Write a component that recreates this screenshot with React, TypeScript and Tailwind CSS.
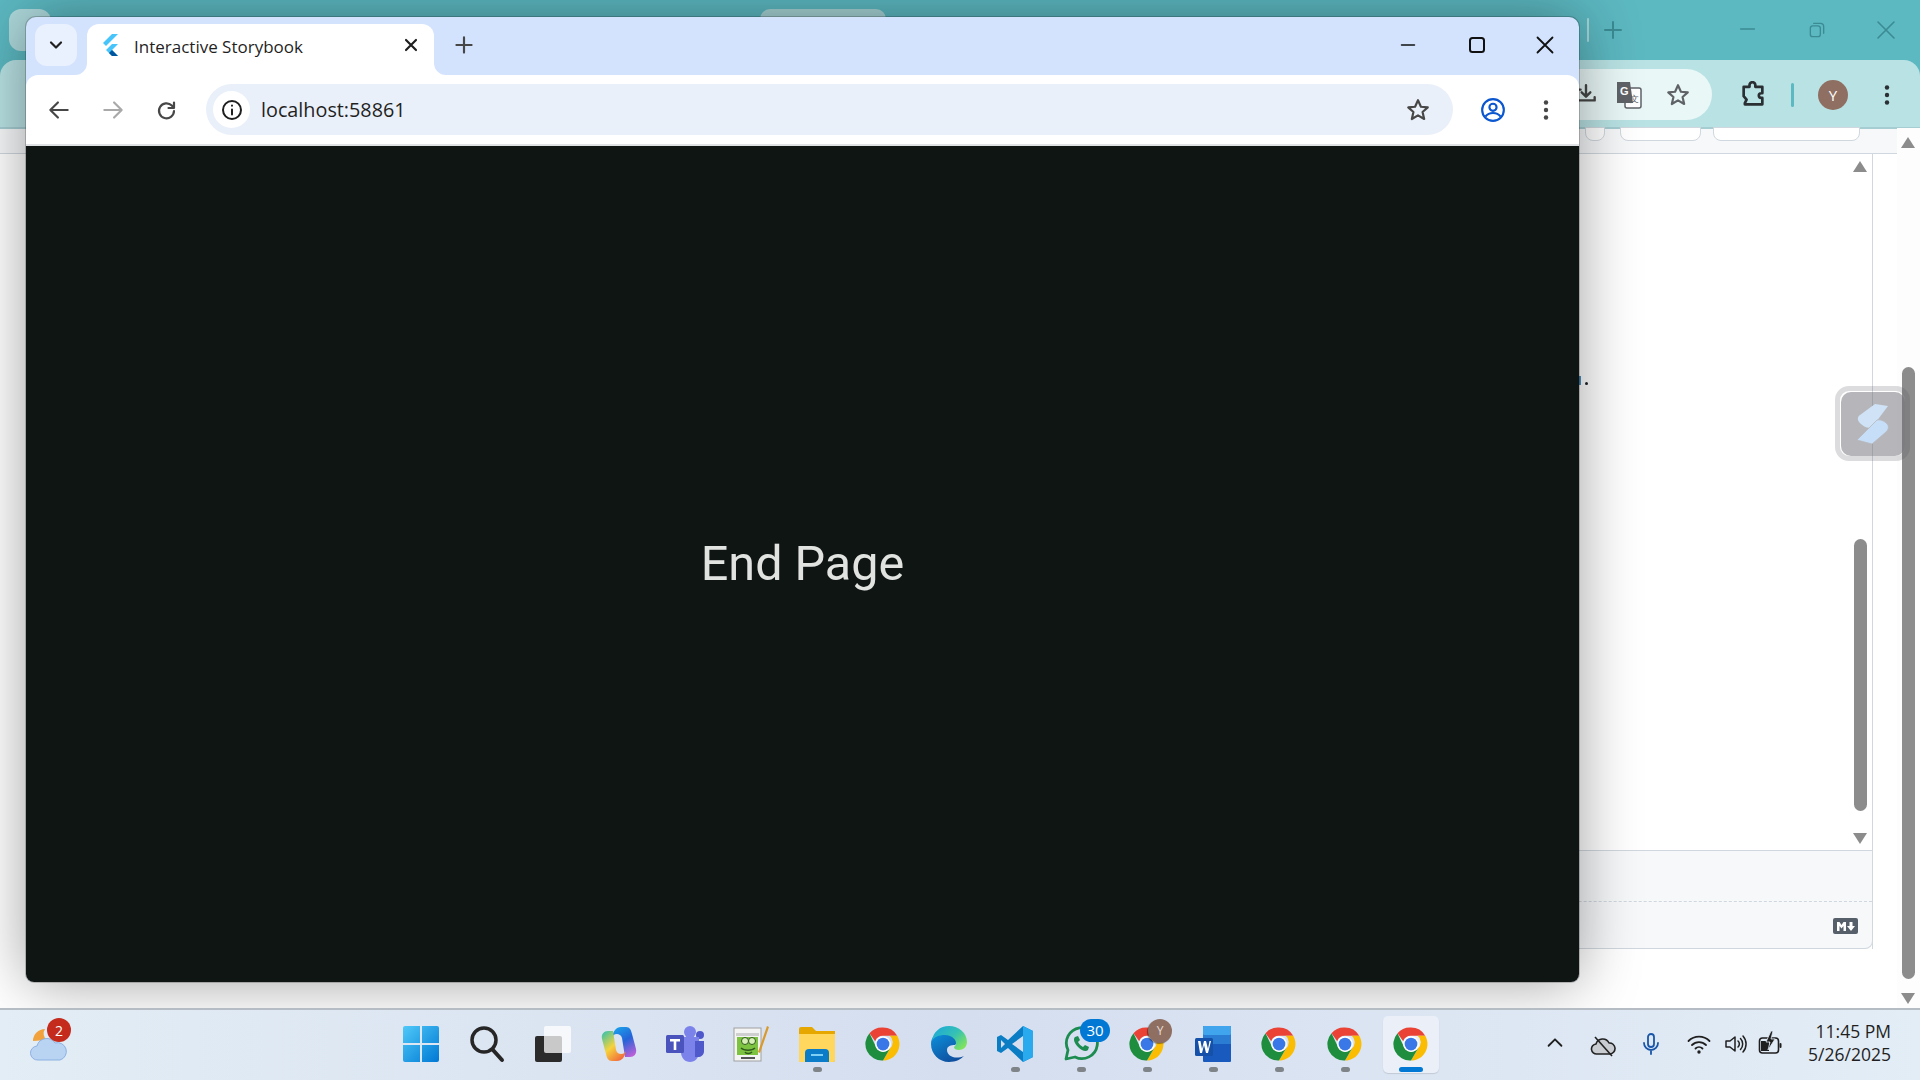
import React from "react";

const sans = "font-['Open_Sans','Noto_Sans',sans-serif]";

function Chrome({ size = 36 }: { size?: number }) {
  return (
    <svg width={size} height={size} viewBox="0 0 48 48">
      <path d="M24 2a22 22 0 0 1 19 11H24a11 11 0 0 0-10.4 7.400L6 9.500A22 22 0 0 1 24 2z" fill="#ea4335" />
      <path d="M43 13a22 22 0 0 1-19 33l9.500-16.500A11 11 0 0 0 33 13z" fill="#fbbc04" />
      <path d="M6 9.500l9.500 20A11 11 0 0 0 33.500 29.500L24 46A22 22 0 0 1 6 9.500z" fill="#1e8e3e" />
      <circle cx="24" cy="24" r="10.500" fill="#fff" />
      <circle cx="24" cy="24" r="8.500" fill="#3b78e7" />
    </svg>
  );
}

function Slot({ children, dot, active }: { children: React.ReactNode; dot?: boolean; active?: boolean }) {
  return (
    <div className="relative flex h-full w-[66px] items-center justify-center pb-[2px]">
      {active && <div className="absolute left-[5px] top-[6px] h-[57px] w-[56px] rounded-[5px] bg-[#eaeff8] shadow-[0_1px_1px_rgba(0,0,0,0.12)]" />}
      <div className="relative">{children}</div>
      {dot && <div className="absolute bottom-[8px] left-[29px] h-[5px] w-[9px] rounded-full bg-[#7f8489]" />}
      {active && <div className="absolute bottom-[8px] left-[21px] h-[5px] w-[24px] rounded-full bg-[#0078d4]" />}
    </div>
  );
}

function Stroke({ size = 24, w = 2, color = "currentColor", children }: { size?: number; w?: number; color?: string; children: React.ReactNode }) {
  return (
    <svg width={size} height={size} viewBox="0 0 24 24" fill="none" stroke={color} strokeWidth={w} strokeLinecap="round" strokeLinejoin="round">
      {children}
    </svg>
  );
}

const Star = ({ color = "#474747", size = 26 }: { color?: string; size?: number }) => (
  <svg width={size} height={size} viewBox="0 0 24 24" fill="none" stroke={color} strokeWidth="2" strokeLinejoin="round">
    <path d="M12 3l2.700 6 6.300.6-4.800 4.200 1.500 6.500L12 16.900l-5.700 3.400 1.500-6.500L3 9.600 9.300 9z" />
  </svg>
);

const Dots = ({ color = "#474747" }: { color?: string }) => (
  <svg width="8" height="24" viewBox="0 0 8 24" fill={color}>
    <circle cx="4" cy="4.500" r="2.200" />
    <circle cx="4" cy="12" r="2.200" />
    <circle cx="4" cy="19.500" r="2.200" />
  </svg>
);

function BackWindow() {
  return (
    <div className="absolute inset-0 flex flex-col bg-[#5cb8c1]">
      <div className="relative flex h-[60px] shrink-0 items-start">
        <div className="absolute left-[9px] top-[9px] h-[42px] w-[42px] rounded-[12px] bg-[#aed9dc]" />
        <div className="absolute left-[760px] top-[9px] h-[20px] w-[126px] rounded-t-[10px] bg-[#a6d3d6]" />
        <div className="absolute left-[1587px] top-[18px] h-[24px] w-[2px] rounded bg-[#a8d9dc]" />
        <div className="absolute left-[1601px] top-[18px] text-[#3b8b93]">
          <Stroke size={24} w={2}><path d="M12 4v16M4 12h16" /></Stroke>
        </div>
        <div className="ml-auto flex h-full items-center text-[#3b8b93]">
          <div className="flex w-[69px] justify-center pb-[2px]"><Stroke size={22} w={1.600}><path d="M4 12h15" /></Stroke></div>
          <div className="flex w-[69px] justify-center"><Stroke size={20} w={1.600}><rect x="4" y="7" width="12" height="13" rx="3" /><path d="M8 4h8a4 4 0 0 1 4 4v8" /></Stroke></div>
          <div className="flex w-[69px] justify-center"><Stroke size={24} w={1.600}><path d="M4 4l16 16M20 4L4 20" /></Stroke></div>
        </div>
      </div>
      <div className="relative flex h-[69px] shrink-0 items-center rounded-t-[16px] border-b-2 border-[#a5cdd2] bg-[#b9e2e4]">
        <div className="absolute left-[1200px] top-[9px] flex h-[51px] w-[512px] items-center justify-end rounded-full bg-[#e9f7f7] pr-[21px] text-[#474747]">
          <div className="mr-[17px]">
            <Stroke size={26} w={2.200}><path d="M12 3v10M8 9.500l4 4 4-4M7 7H4v10h16v-3" /></Stroke>
          </div>
          <div className="mr-[23px]">
            <svg width="26" height="30" viewBox="0 0 26 30">
              <rect x="9" y="8" width="16" height="20" rx="2" fill="#fff" stroke="#5f6368" strokeWidth="1.500" />
              <path d="M1 2h13l3 21H1z" fill="#5f6368" />
              <text x="4" y="15" fontSize="11" fill="#fff" fontFamily="Liberation Sans" fontWeight="700">G</text>
              <text x="14" y="22" fontSize="9" fill="#5f6368" fontFamily="Liberation Sans">文</text>
            </svg>
          </div>
          <Star color="#5f6368" size={26} />
        </div>
        <div className="absolute left-[1739px] top-[21px] text-[#2a2f33]">
          <svg width="28" height="28" viewBox="0 0 24 24" fill="none" stroke="currentColor" strokeWidth="2.300" strokeLinejoin="round">
            <path d="M4 5h5V3.500a2.500 2.500 0 0 1 5 0V5h6v5.500h-1a2 2 0 0 0 0 4h1V20H5v-1l1.500-3L4 13z" />
          </svg>
        </div>
        <div className="absolute left-[1791px] top-[23px] h-[24px] w-[3px] rounded bg-[#5cb8c1]" />
        <div className={`absolute left-[1818px] top-[20px] flex h-[30px] w-[30px] items-center justify-center rounded-full bg-[#8f6f61] text-[15px] text-white ${sans}`}>Y</div>
        <div className="absolute left-[1883px] top-[23px]"><Dots color="#2a2f33" /></div>
      </div>
      <div className="relative flex h-[25px] shrink-0 items-start border-b border-[#d0d7de] bg-[#f6f8fa]">
        <div className="absolute left-[1585px] top-[-2px] h-[14px] w-[20px] rounded-b-[8px] border border-[#d0d7de] bg-white" />
        <div className="absolute left-[1620px] top-[-2px] h-[14px] w-[81px] rounded-b-[8px] border border-[#d0d7de] bg-white" />
        <div className="absolute left-[1713px] top-[-2px] h-[14px] w-[147px] rounded-b-[8px] border border-[#d0d7de] bg-white" />
      </div>
      <div className="relative flex-1 bg-white">
        <div className="absolute right-[47px] top-0 h-[795px] w-px bg-[#d0d7de]" />
        <div className="absolute bottom-[59px] right-[47px] h-[99px] w-[800px] rounded-br-[8px] border-b border-r border-t border-[#d0d7de] bg-[#f6f8fa]">
          <div className="mt-[50px] border-b border-dashed border-[#d0d7de]" />
          <div className="absolute right-[14px] top-[67px] flex h-[16px] w-[25px] items-center justify-center rounded-[2px] bg-[#57606a]">
            <svg width="20" height="11" viewBox="0 0 20 11" fill="#fff">
              <path d="M1 1h2.500l2 3 2-3H10v9H7.500V5l-2 2.500L3.500 5v5H1z" />
              <path d="M13.500 1h3v4H19l-4 5-4-5h2.500z" />
            </svg>
          </div>
        </div>
        <div className="absolute right-[53px] top-[385px] h-[272px] w-[13px] rounded-full bg-[#8c8c8c]" />
        <div className="absolute right-[53px] top-[7px] h-0 w-0 border-x-[7px] border-b-[11px] border-x-transparent border-b-[#8c8c8c]" />
        <div className="absolute right-[53px] top-[679px] h-0 w-0 border-x-[7px] border-t-[11px] border-x-transparent border-t-[#8c8c8c]" />
        <div className="absolute right-0 top-[-26px] h-[880px] w-[23px] bg-[#fdfdfd]">
          <div className="absolute left-[5px] top-[239px] h-[612px] w-[13px] rounded-full bg-[#8c8c8c]" />
          <div className="absolute left-[4px] top-[9px] h-0 w-0 border-x-[7px] border-b-[11px] border-x-transparent border-b-[#8c8c8c]" />
          <div className="absolute left-[4px] top-[865px] h-0 w-0 border-x-[7px] border-t-[11px] border-x-transparent border-t-[#8c8c8c]" />
        </div>
        <div className="absolute left-[1585px] top-[228px] h-[3px] w-[3px] rounded-full bg-[#1f2328]" />
        <div className="absolute left-[1579px] top-[222px] h-[9px] w-[2px] bg-[#4a90c2]" />
        <div className="absolute left-[1835px] top-[232px] flex h-[75px] w-[75px] items-center justify-center rounded-[14px] border-[5px] border-[#50505a]/20 bg-clip-padding">
          <div className="flex h-[64px] w-[64px] items-center justify-center rounded-[10px] bg-[#6e6e75]/50">
            <svg width="35" height="43" viewBox="0 0 35 43">
              <path d="M20 2L33 4 18 24C15 27 10 26 6 22 2 19 2 15 5 13z" fill="#cfe2f6" />
              <path d="M22 18C26 17 31 20 33 23 34 26 33 28 31 30L17 42 2 38z" fill="#c6def7" stroke="#b6b7bb" strokeWidth="0.800" />
            </svg>
          </div>
        </div>
      </div>
    </div>
  );
}

function FrontWindow() {
  return (
    <div className="absolute left-[26px] top-[17px] flex h-[965px] w-[1553px] flex-col overflow-hidden rounded-t-[10px] rounded-b-[8px] bg-[#d3e3fd] shadow-[0_0_0_1px_rgba(0,0,0,0.2),0_0_60px_rgba(0,0,0,0.38)]">
      <div className="relative z-10 flex h-[58px] shrink-0 items-start pl-[9px] pt-[7px]">
        <div className="flex h-[42px] w-[42px] items-center justify-center rounded-[12px] bg-[#e9f0fe] text-[#1f1f1f]">
          <Stroke size={20} w={2.600}><path d="M6 9l6 6 6-6" /></Stroke>
        </div>
        <div className="relative ml-[10px] flex h-[51px] w-[347px] items-center rounded-t-[12px] bg-white pb-[7px] pl-[13px] pr-[13px]">
          <svg className="absolute bottom-0 left-[-12px]" width="12" height="12" viewBox="0 0 12 12" fill="#fff"><path d="M12 0v12H0A12 12 0 0 0 12 0z" /></svg>
          <svg className="absolute bottom-0 right-[-12px]" width="12" height="12" viewBox="0 0 12 12" fill="#fff"><path d="M0 0v12h12A12 12 0 0 1 0 0z" /></svg>
          <svg width="20" height="24" viewBox="0 0 20 24" className="mb-[2px] shrink-0">
            <path d="M12 1h6L6 13l-3-3z" fill="#47c5fb" />
            <path d="M12 11h6l-6 6 6 6h-6l-6-6z" fill="#47c5fb" />
            <path d="M9 20l3-3 6 6h-6z" fill="#00569e" />
          </svg>
          <span className={`ml-[14px] flex-1 whitespace-nowrap text-[17px] leading-none text-[#1f1f1f] ${sans}`}>Interactive Storybook</span>
          <div className="mb-[2px]"><Stroke size={20} w={2.600} color="#1f1f1f"><path d="M6 6l12 12M18 6L6 18" /></Stroke></div>
        </div>
        <div className="ml-[17px] mt-[8px] text-[#474747]">
          <Stroke size={26} w={2}><path d="M12 5v14M5 12h14" /></Stroke>
        </div>
        <div className="ml-auto flex h-[42px] items-center text-[#111]">
          <div className="flex w-[69px] justify-center"><Stroke size={22} w={1.800}><path d="M5 12h14" /></Stroke></div>
          <div className="flex w-[69px] justify-center"><Stroke size={24} w={2}><rect x="5" y="5" width="14" height="14" rx="2.500" /></Stroke></div>
          <div className="flex w-[68px] justify-center"><Stroke size={24} w={1.800}><path d="M4.500 4.500l15 15M19.500 4.500l-15 15" /></Stroke></div>
        </div>
      </div>
      <div className="flex h-[71px] shrink-0 items-center rounded-t-[12px] border-b-2 border-[#dfe1e5] bg-white">
        <div className="flex w-[180px] items-center pl-[6px]">
          <div className="flex w-[54px] justify-center text-[#474747]"><Stroke size={26} w={2}><path d="M20 12H4M11 5l-7 7 7 7" /></Stroke></div>
          <div className="flex w-[54px] justify-center text-[#a9a9a9]"><Stroke size={26} w={2}><path d="M4 12h16M13 5l7 7-7 7" /></Stroke></div>
          <div className="flex w-[54px] justify-center text-[#474747]"><Stroke size={24} w={2.200}><path d="M19 13a7.500 7.500 0 1 1-2.200-5.500L19 10M19 4.500V10h-5.500" /></Stroke></div>
        </div>
        <div className="flex h-[51px] w-[1247px] items-center rounded-full bg-[#eaf0f9] pl-[7px] pr-[22px]">
          <div className="flex h-[37px] w-[37px] items-center justify-center rounded-full bg-white text-[#1f1f1f]">
            <Stroke size={24} w={2}><circle cx="12" cy="12" r="9" /><path d="M12 11.500v5M12 7.500v.2" /></Stroke>
          </div>
          <span className={`ml-[11px] flex-1 pt-[1px] text-[19.800px] leading-none text-[#1f1f1f] ${sans}`}>localhost:58861</span>
          <Star />
        </div>
        <div className="ml-[20px] flex h-[36px] w-[40px] items-center justify-center">
          <svg width="26" height="26" viewBox="0 0 24 24" fill="none" stroke="#0b57d0" strokeWidth="2">
            <circle cx="12" cy="12" r="10" />
            <circle cx="12" cy="9.500" r="3.300" />
            <path d="M5 18c2-2.500 4.500-3.200 7-3.200s5 .7 7 3.200" />
          </svg>
        </div>
        <div className="ml-[21px] flex w-[24px] justify-center"><Dots /></div>
      </div>
      <div className="flex flex-1 items-center justify-center bg-[#0f1513] font-['Roboto',sans-serif] text-[48.500px] leading-none text-[#e1e3e1]">End Page</div>
    </div>
  );
}

function Taskbar() {
  return (
    <div className="relative flex h-[72px] shrink-0 items-center border-t-2 border-[#b5bcc4] bg-gradient-to-r from-[#e3edf5] via-[#d5deef] to-[#e3edf6]">
      <div className="absolute left-[30px] top-[14px]">
        <svg width="38" height="40" viewBox="0 0 38 40">
          <path d="M15 5a12 12 0 0 0-12 12l14-1a8 8 0 0 1-2-11z" fill="#f2a23c" />
          <path d="M8 36a7 7 0 0 1-1-14 10 10 0 0 1 18-3 8 8 0 0 1 5 17z" fill="#b9d3f2" stroke="#8db1e3" />
        </svg>
      </div>
      <div className={`absolute left-[47px] top-[8px] flex h-[24px] w-[24px] items-center justify-center rounded-full bg-[#c42b1c] text-[14px] text-white ${sans}`}>2</div>
      <div className="absolute left-[388px] top-0 flex h-[70px]">
        <Slot>
          <svg width="36" height="36" viewBox="0 0 36 36">
            <defs>
              <linearGradient id="w" x1="0" y1="0" x2="1" y2="1"><stop offset="0" stopColor="#4fc9f8" /><stop offset="1" stopColor="#0078d4" /></linearGradient>
            </defs>
            <path d="M0 2a2 2 0 0 1 2-2h15v17H0zM19 0h15a2 2 0 0 1 2 2v15H19zM0 19h17v17H2a2 2 0 0 1-2-2zM19 19h17v15a2 2 0 0 1-2 2H19z" fill="url(#w)" />
          </svg>
        </Slot>
        <Slot>
          <svg width="36" height="38" viewBox="0 0 36 38" fill="none" stroke="#262626" strokeLinecap="round">
            <circle cx="15" cy="15" r="12" strokeWidth="3.500" />
            <path d="M24 25l9 10" strokeWidth="4" />
          </svg>
        </Slot>
        <Slot>
          <svg width="36" height="36" viewBox="0 0 36 36">
            <rect x="0" y="10" width="27" height="26" rx="2" fill="#2b2b2b" />
            <rect x="9" y="0" width="27" height="27" rx="2" fill="#ffffff" fillOpacity="0.75" />
          </svg>
        </Slot>
        <Slot>
          <svg width="38" height="40" viewBox="0 0 38 40">
            <defs>
              <linearGradient id="c1" x1="0.300" y1="0" x2="0.800" y2="1"><stop offset="0" stopColor="#1c9be8" /><stop offset="0.450" stopColor="#2464d8" /><stop offset="1" stopColor="#c05fd8" /></linearGradient>
              <linearGradient id="c2" x1="0.100" y1="0" x2="0.800" y2="1"><stop offset="0" stopColor="#3cc2a8" /><stop offset="0.500" stopColor="#f6d33c" /><stop offset="1" stopColor="#f0643c" /></linearGradient>
            </defs>
            <path d="M12 14C13 7 16 3 21 3h5c4 0 5 3 6 7l4 15c1 5-2 8-6 8h-5l-3-19c-1-3-3-4-5-4-3 0-5 2-5 4z" fill="url(#c1)" />
            <path d="M26 26c-1 7-4 11-9 11h-5c-4 0-5-3-6-7L2 15C1 10 4 7 8 7h5l3 19c1 3 3 4 5 4 3 0 5-2 5-4z" fill="url(#c2)" />
          </svg>
        </Slot>
        <Slot>
          <svg width="38" height="38" viewBox="0 0 38 38">
            <circle cx="24" cy="7" r="6" fill="#7b83eb" />
            <circle cx="34" cy="10" r="4" fill="#4f58ca" />
            <path d="M15 12h18v15c0 6-4 10-9 10s-9-4-9-10z" fill="#7b83eb" />
            <path d="M29 16h9v10c0 4-3 6-6 6h-3z" fill="#5059c9" />
            <rect x="0" y="10" width="18" height="18" rx="1.500" fill="#4b53bc" />
            <path d="M4 14h10v2.500h-3.700V25H7.700v-8.500H4z" fill="#fff" />
          </svg>
        </Slot>
        <Slot>
          <svg width="36" height="40" viewBox="0 0 36 40">
            <rect x="1" y="4" width="27" height="33" fill="#f4f4f4" stroke="#a0a0a0" />
            <path d="M3 9h23v3H3z" fill="#cfcfcf" />
            <path d="M4 13h21v18H4z" fill="#7ec242" />
            <circle cx="12" cy="17" r="3.500" fill="#d8efb8" stroke="#2f5c1c" />
            <circle cx="19" cy="17" r="3.500" fill="#d8efb8" stroke="#2f5c1c" />
            <path d="M8 24c3 3 11 3 14 0M12 28c1 2 5 2 7 0" fill="none" stroke="#2f5c1c" strokeWidth="1.500" />
            <path d="M8 33h14v2H8z" fill="#555" />
            <path d="M25 28L34 2l2 1-9 26z" fill="#d99a2b" />
          </svg>
        </Slot>
        <Slot dot>
          <svg width="36" height="36" viewBox="0 0 36 36">
            <path d="M0 3a2 2 0 0 1 2-2h11l4 4h19v29a2 2 0 0 1-2 2H0z" fill="#e6a800" />
            <path d="M0 8h36v26a2 2 0 0 1-2 2H0z" fill="#ffd75e" />
            <path d="M6 36V27a4 4 0 0 1 4-4h16a4 4 0 0 1 4 4v9z" fill="#0a7cc8" />
            <rect x="12" y="28" width="12" height="2" fill="#7fd0f5" />
          </svg>
        </Slot>
        <Slot><Chrome /></Slot>
        <Slot>
          <svg width="36" height="36" viewBox="0 0 36 36">
            <defs>
              <linearGradient id="e1" x1="0" y1="0" x2="1" y2="0.700"><stop offset="0" stopColor="#1aa6dc" /><stop offset="0.600" stopColor="#35c1b4" /><stop offset="1" stopColor="#7de25f" /></linearGradient>
              <linearGradient id="e2" x1="0.200" y1="0" x2="0.800" y2="1"><stop offset="0" stopColor="#0c8ed9" /><stop offset="1" stopColor="#0f4a9a" /></linearGradient>
            </defs>
            <path d="M0 18C0 10 6 6 14 6c7 0 12 4 12 9 0 2-1 3-2 4-4 0-8 1-8 5 0 6 8 10 17 6-3 3-8 6-15 6C8 36 0 28 0 18z" fill="url(#e2)" />
            <path d="M1 15C2 6 9 0 18 0c10 0 18 7 18 16 0 5-4 8-8 8-3 0-5-1-5-3 1-1 2-2 2-4 0-4-5-8-11-8C8 9 3 11 1 15z" fill="url(#e1)" />
          </svg>
        </Slot>
        <Slot dot>
          <svg width="36" height="36" viewBox="0 0 36 36">
            <path d="M26 0l10 5v26l-10 5-15-14-7 5-4-2V11l4-2 7 5z" fill="#0a7dc4" />
            <path d="M26 0l10 5v26l-10 5z" fill="#29a9ee" />
            <path d="M26 10L15 18l11 8z" fill="#d8deee" />
            <path d="M4 14v8l4-4z" fill="#d8deee" />
          </svg>
        </Slot>
        <Slot dot>
          <div className="relative">
            <svg width="36" height="36" viewBox="0 0 36 36" fill="none">
              <path d="M3 33l2-9A15.500 15.500 0 1 1 12 31z" stroke="#1c8c50" strokeWidth="2.800" strokeLinejoin="round" />
              <path d="M12 11c-2 2-1 6 3 10s8 5 10 3l1-3-4-2-2 2c-2-1-4-3-5-5l2-2-2-4z" fill="#1c8c50" />
            </svg>
            <div className={`absolute left-[17px] top-[-7px] flex h-[23px] w-[30px] items-center justify-center rounded-full bg-[#0078d4] text-[15px] text-white ${sans}`}>30</div>
          </div>
        </Slot>
        <Slot dot>
          <div className="relative">
            <Chrome />
            <div className={`absolute left-[19px] top-[-7px] flex h-[24px] w-[24px] items-center justify-center rounded-full bg-[#8f6f61] text-[12px] text-[#e6ddd8] shadow-[-1px_1px_1px_rgba(0,0,0,0.4)] ${sans}`}>Y</div>
          </div>
        </Slot>
        <Slot dot>
          <svg width="36" height="36" viewBox="0 0 36 36">
            <rect x="8" y="0" width="28" height="36" rx="1" fill="#185abd" />
            <rect x="8" y="0" width="28" height="9" rx="1" fill="#41a5ee" />
            <rect x="8" y="9" width="28" height="9" fill="#2b7cd3" />
            <rect x="0" y="12" width="18" height="18" rx="1.500" fill="#1551a8" />
            <path d="M3 15h2.500l1.500 8 2-8h2l2 8 1.500-8H16l-3 12h-2l-2-8-2 8H5z" fill="#fff" />
          </svg>
        </Slot>
        <Slot dot><Chrome /></Slot>
        <Slot dot><Chrome /></Slot>
        <Slot active><Chrome /></Slot>
      </div>
      <div className="absolute left-[1544px] top-[22px] text-[#1f1f1f]">
        <Stroke size={22} w={2}><path d="M5 15l7-7 7 7" /></Stroke>
      </div>
      <div className="absolute left-[1590px] top-[24px] text-[#222]">
        <svg width="26" height="24" viewBox="0 0 26 24" fill="#c9ccd0" stroke="currentColor" strokeWidth="1.600" strokeLinejoin="round">
          <path d="M7 20a5 5 0 0 1-1-10 7 7 0 0 1 13-1 5.500 5.500 0 0 1 1 11z" />
          <path d="M5 3l17 19" fill="none" />
        </svg>
      </div>
      <div className="absolute left-[1639px] top-[22px] text-[#1a56a8]">
        <Stroke size={24} w={1.800}><rect x="9" y="2" width="6" height="13" rx="3" /><path d="M5 11a7 7 0 0 0 14 0M12 18v4" /></Stroke>
      </div>
      <div className="absolute left-[1687px] top-[22px] text-[#1f1f1f]">
        <Stroke size={24} w={1.800}><path d="M1.500 9a15 15 0 0 1 21 0M5 13a10 10 0 0 1 14 0M8.500 16.500a5 5 0 0 1 7 0" /><circle cx="12" cy="20" r="0.800" /></Stroke>
      </div>
      <div className="absolute left-[1723px] top-[22px] text-[#1f1f1f]">
        <Stroke size={24} w={1.500}><path d="M3 9h4l5-4v14l-5-4H3zM15 9a4 4 0 0 1 0 6M17.500 6.500a8 8 0 0 1 0 11M20 4a12 12 0 0 1 0 16" /></Stroke>
      </div>
      <div className="absolute left-[1758px] top-[20px] text-[#1f1f1f]">
        <svg width="24" height="26" viewBox="0 0 24 26">
          <rect x="1.500" y="8" width="19" height="15" rx="3" fill="none" stroke="currentColor" strokeWidth="1.600" />
          <path d="M3 11h8v10H3z" fill="currentColor" />
          <path d="M13 1l-5 11h4l-2 8 7-11h-4l2-8z" fill="currentColor" stroke="#e0eaf5" strokeWidth="0.800" />
          <rect x="21.500" y="13" width="2" height="5" rx="1" fill="currentColor" />
        </svg>
      </div>
      <div className={`absolute right-[29px] top-[10px] flex flex-col items-end text-[17.500px] leading-[23px] text-[#1f1f1f] ${sans}`}>
        <span>11:45 PM</span>
        <span>5/26/2025</span>
      </div>
    </div>
  );
}

export default function App() {
  return (
    <div className="flex h-[1080px] w-[1920px] flex-col overflow-hidden">
      <div className="relative flex-1">
        <BackWindow />
        <FrontWindow />
      </div>
      <Taskbar />
    </div>
  );
}
